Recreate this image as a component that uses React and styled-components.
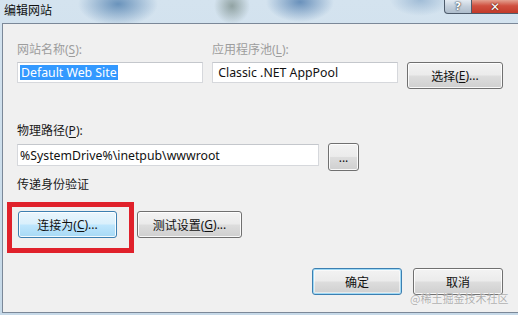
import React from "react";
import styled, { createGlobalStyle, css } from "styled-components";

const Global = createGlobalStyle`
  html, body {
    margin: 0;
    padding: 0;
    overflow: hidden;
    background: #f0f0f0;
  }
  body {
    font-family: "Noto Sans", "Noto Sans CJK SC", sans-serif;
    font-size: 12px;
  }
`;

const Window = styled.div`
  position: relative;
  width: 518px;
  height: 315px;
  display: flex;
  flex-direction: column;
  overflow: hidden;
  background:
    radial-gradient(ellipse 40px 22px at 118px 4px, rgba(70, 120, 170, 0.75), transparent 100%),
    radial-gradient(ellipse 18px 18px at 232px 6px, rgba(90, 110, 100, 0.55), transparent 100%),
    radial-gradient(ellipse 34px 20px at 300px 2px, rgba(60, 110, 165, 0.7), transparent 100%),
    radial-gradient(ellipse 30px 16px at 420px 0px, rgba(110, 150, 190, 0.5), transparent 100%),
    linear-gradient(180deg, #d4e3ef 0%, #c6d9e8 100%);
`;

const TitleBar = styled.div`
  height: 23px;
  display: flex;
  align-items: flex-start;
  padding-left: 4px;
`;

const Title = styled.span`
  margin-top: 3px;
  line-height: 14px;
  color: #111;
  font-family: "Noto Sans CJK SC", sans-serif;
`;

const CaptionButtons = styled.div`
  margin-left: auto;
  display: flex;
  height: 14px;
`;

const CaptionButton = styled.div`
  height: 14px;
  display: flex;
  align-items: center;
  justify-content: center;
  box-sizing: border-box;
  border: 1px solid #4d5b6b;
  border-top: none;
  color: #fff;
  font-family: "DejaVu Sans", sans-serif;
  font-weight: bold;
  ${(p) =>
    p.$close
      ? css`
          width: 46px;
          border-left: none;
          border-right: none;
          background: linear-gradient(180deg, #e3a190 0%, #d0503f 45%, #c23a2a 100%);
          font-size: 12px;
          text-shadow: 0 0 2px #5a1a10, 0 0 1px #5a1a10;
        `
      : css`
          width: 28px;
          border-bottom-left-radius: 4px;
          background: linear-gradient(180deg, #e4ebf2 0%, #c3cfdb 50%, #aebdcc 100%);
          font-size: 11px;
          text-shadow: 0 0 2px #2a3540, 0 0 1px #2a3540;
        `}
`;

const Client = styled.div`
  flex: 1;
  margin: 0 0 2px 2px;
  border: 1px solid #7b8898;
  border-right: none;
  background: #f0f0f0;
  padding: 19px 15px 0 14px;
  display: flex;
  flex-direction: column;
`;

const TopGrid = styled.div`
  display: grid;
  grid-template-columns: 186px 186px 96px;
  grid-template-rows: 14px auto;
  column-gap: 9px;
  row-gap: 5px;
  align-items: start;
`;

const Label = styled.div`
  line-height: 14px;
  height: 14px;
  white-space: nowrap;
  color: ${(p) => (p.$disabled ? "#9d9d9d" : "#1a1a1a")};
  margin-top: ${(p) => p.$mt || 0}px;
  margin-bottom: ${(p) => p.$mb || 0}px;
  u {
    text-decoration-thickness: 1px;
    text-underline-offset: 2px;
  }
`;

const TextBox = styled.div`
  box-sizing: border-box;
  width: ${(p) => p.$w}px;
  height: ${(p) => p.$h || 21}px;
  margin-top: ${(p) => p.$mt || 0}px;
  background: #fff;
  border: 1px solid #d6d8dc;
  border-top-color: #c4c7cc;
  display: flex;
  align-items: center;
  padding-left: 2px;
  color: #111;
  font-size: 12.3px;
  white-space: nowrap;
  overflow: hidden;
`;

const Selected = styled.span`
  background: #3399ff;
  color: #fff;
  line-height: 15px;
  padding: 0 1px;
`;

const Button = styled.div`
  box-sizing: border-box;
  width: ${(p) => p.$w}px;
  height: ${(p) => p.$h || 27}px;
  border: 1px solid #707070;
  border-radius: 3px;
  display: flex;
  align-items: center;
  justify-content: center;
  color: #111;
  white-space: nowrap;
  background: linear-gradient(180deg, #f3f3f3 0%, #ebebeb 48%, #dddddd 52%, #cfcfcf 100%);
  box-shadow: inset 0 0 0 1px rgba(255, 255, 255, 0.85);
  u {
    text-decoration-thickness: 1px;
    text-underline-offset: 2px;
  }
  ${(p) =>
    p.$variant === "hover" &&
    css`
      border-color: #3c7fb1;
      background: linear-gradient(180deg, #eaf6fd 0%, #d9f0fc 48%, #bee6fd 52%, #a7d9f5 100%);
    `}
  ${(p) =>
    p.$variant === "default" &&
    css`
      border-color: #3c7fb1;
      box-shadow: inset 0 0 0 1px #9fd9f5, inset 0 0 0 2px rgba(255, 255, 255, 0.5);
    `}
`;

const PathRow = styled.div`
  display: flex;
  align-items: flex-start;
  gap: 9px;
`;

const ButtonRow = styled.div`
  display: flex;
  gap: ${(p) => p.$gap || 20}px;
  justify-content: ${(p) => (p.$end ? "flex-end" : "flex-start")};
  margin-top: ${(p) => p.$mt || 0}px;
  margin-left: ${(p) => p.$ml || 0}px;
`;

const Marked = styled.div`
  position: relative;
`;

const RedFrame = styled.div`
  position: absolute;
  left: -11px;
  top: -9px;
  width: 127px;
  height: 51px;
  box-sizing: border-box;
  border: 5px solid #e0212b;
  pointer-events: none;
`;

const Watermark = styled.div`
  position: absolute;
  left: 410px;
  top: 292px;
  font-family: "Noto Sans CJK SC", sans-serif;
  font-size: 11px;
  line-height: 13px;
  color: rgba(150, 150, 150, 0.75);
  text-shadow: 0 0 1px rgba(255, 255, 255, 0.9);
  white-space: nowrap;
`;

export default function App() {
  return (
    <>
      <Global />
      <Window>
        <TitleBar>
          <Title>编辑网站</Title>
          <CaptionButtons>
            <CaptionButton>?</CaptionButton>
            <CaptionButton $close>✕</CaptionButton>
          </CaptionButtons>
        </TitleBar>
        <Client>
          <TopGrid>
            <Label $disabled>
              网站名称(<u>S</u>):
            </Label>
            <Label $disabled>
              应用程序池(<u>L</u>):
            </Label>
            <div />
            <TextBox $w={186}>
              <Selected>Default Web Site</Selected>
            </TextBox>
            <TextBox $w={186}>&nbsp;Classic .NET AppPool</TextBox>
            <Button $w={96}>
              选择(<u>E</u>)...
            </Button>
          </TopGrid>

          <Label $mt={35} $mb={5}>
            物理路径(<u>P</u>):
          </Label>
          <PathRow>
            <TextBox $w={302} $h={22} $mt={1}>
              %SystemDrive%\inetpub\wwwroot
            </TextBox>
            <Button $w={31} $h={28}>
              ...
            </Button>
          </PathRow>

          <Label $mt={7}>传递身份验证</Label>

          <ButtonRow $mt={19} $ml={1} $gap={20}>
            <Marked>
              <Button $w={99} $variant="hover">
                连接为(<u>C</u>)...
              </Button>
              <RedFrame />
            </Marked>
            <Button $w={105}>
              测试设置(<u>G</u>)...
            </Button>
          </ButtonRow>

          <ButtonRow $end $mt={30} $gap={11}>
            <Button $w={90} $variant="default">
              确定
            </Button>
            <Button $w={90}>取消</Button>
          </ButtonRow>
        </Client>
        <Watermark>@稀土掘金技术社区</Watermark>
      </Window>
    </>
  );
}
